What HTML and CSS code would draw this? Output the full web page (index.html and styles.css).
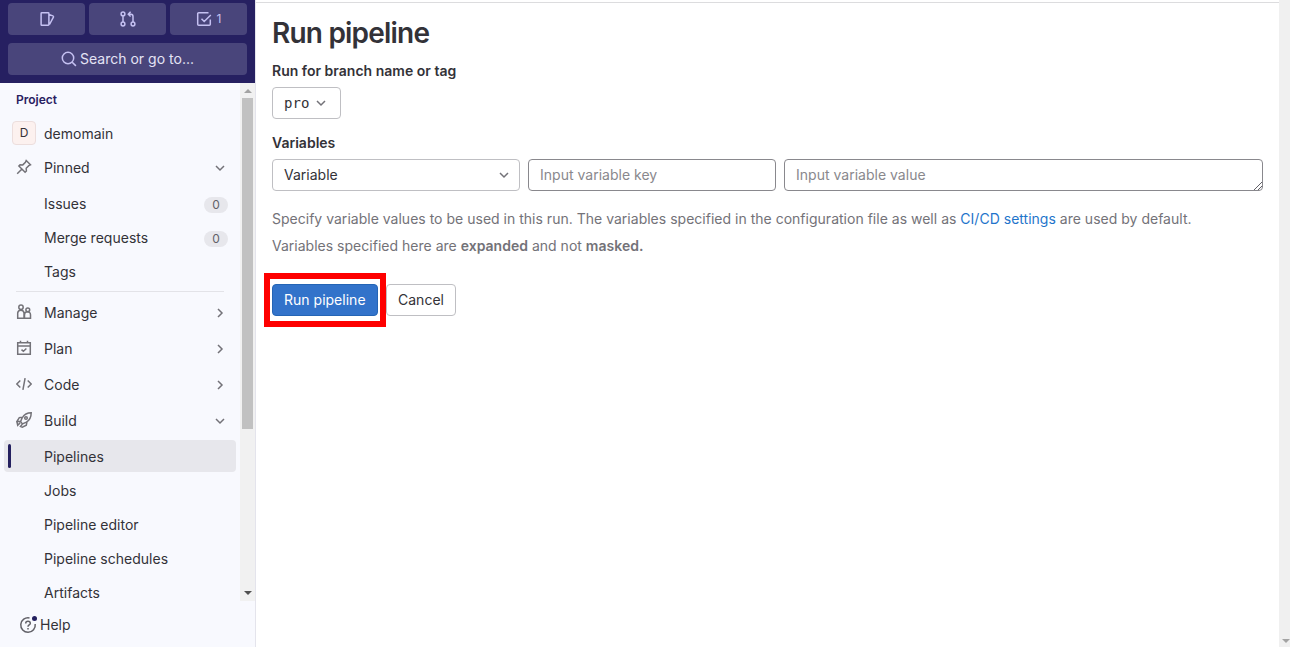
FILE: index.html
```html
<!DOCTYPE html>
<html lang="en">
<head>
<meta charset="utf-8">
<title>Run pipeline</title>
<link rel="stylesheet" href="styles.css">
</head>
<body>
<div class="app">
  <aside class="sidebar">
    <header class="top">
      <div class="counters">
        <button class="tool" aria-label="Issues"><svg class="ico" viewBox="0 0 16 16"><path d="M2.800 1.700h6.400a.7.7 0 0 1 .7.7v11.200a.7.7 0 0 1-.7.7H2.800a.7.7 0 0 1-.7-.7V2.400a.7.7 0 0 1 .7-.7zM10 3.500l3.800 1.400c.6.2.8.7.6 1.200L10.500 13.500"/></svg></button>
        <button class="tool" aria-label="Merge requests"><svg class="ico" viewBox="0 0 16 16"><circle cx="3" cy="2.900" r="1.900"/><circle cx="3" cy="13" r="1.900"/><circle cx="13" cy="13" r="1.900"/><path d="M3 5v6M13 11V5.500c0-1.300-.7-2.300-2-2.300H8.500M10.600.8L8.300 3.200l2.300 2.300"/></svg></button>
        <button class="tool" aria-label="To-do"><svg class="ico" viewBox="0 0 16 16"><path d="M14.300 8.500v4.800a1 1 0 0 1-1 1H2.700a1 1 0 0 1-1-1V2.700a1 1 0 0 1 1-1h9.800M5.500 7.700l2.700 2.800L14.800 4"/></svg><span>1</span></button>
      </div>
      <button class="search"><svg class="ico" viewBox="0 0 16 16"><circle cx="7" cy="7" r="5.700"/><path d="M11.200 11.200l3.700 3.700"/></svg><span>Search or go to...</span></button>
    </header>
    <div class="scroller">
      <nav class="nav">
        <h2 class="context">Project</h2>
        <a class="item project"><span class="avatar">D</span><span class="label">demomain</span></a>
        <a class="item gap-after"><svg class="ico" viewBox="0 0 16 16"><path d="M1.200 14.800L5.700 10.300M10.200 1.500l4.300 4.300-1.700.9-2.600 2.600.2 2.700-1.300 1.200L2.900 7l1.200-1.200 2.700.1 2.600-2.600z"/></svg><span class="label">Pinned</span><svg class="chev" viewBox="0 0 16 16"><path d="M4 6l4 4 4-4"/></svg></a>
        <a class="item sub"><span class="label">Issues</span><span class="badge">0</span></a>
        <a class="item sub"><span class="label">Merge requests</span><span class="badge">0</span></a>
        <a class="item sub"><span class="label">Tags</span></a>
        <hr class="rule">
        <a class="item section"><svg class="ico" viewBox="0 0 16 16"><circle cx="5" cy="3.300" r="2.200"/><circle cx="11.800" cy="5.800" r="1.900"/><path d="M8 14.300H1.700V8.800a3.200 3.200 0 0 1 6.300 0zM8.500 14.300h6v-3.600a2.800 2.800 0 0 0-6 0z"/></svg><span class="label">Manage</span><svg class="chev" viewBox="0 0 16 16"><path d="M6 4l4 4-4 4"/></svg></a>
        <a class="item section"><svg class="ico" viewBox="0 0 16 16"><path d="M1.700 2.700h12.600v11.600H1.700zM1.700 6h12.600M4.500.7v2M11.500.7v2M5.500 9.600l1.900 1.700 3-2.800"/></svg><span class="label">Plan</span><svg class="chev" viewBox="0 0 16 16"><path d="M6 4l4 4-4 4"/></svg></a>
        <a class="item section"><svg class="ico" viewBox="0 0 16 16"><path d="M4.300 4.500L.8 8l3.500 3.500M11.700 4.500L15.200 8l-3.500 3.500M9.100 2.200L6.900 13.800"/></svg><span class="label">Code</span><svg class="chev" viewBox="0 0 16 16"><path d="M6 4l4 4-4 4"/></svg></a>
        <a class="item section"><svg class="ico" viewBox="0 0 16 16"><path d="M15.200.8c-4.400 0-6.800 1.400-9 5L4.500 9.600l2 2.300 3.900-1.700c3.600-2.200 4.800-5 4.800-9.400zM6.500 5.300L3.300 5.600.9 9.500l3.600.1M.9 9.500l.8 3.700 2.400-2.300M6.500 11.900l-2 2.600 1.800.7 4-1.900.7-3.500"/><circle cx="10" cy="6" r="1.300"/></svg><span class="label">Build</span><svg class="chev" viewBox="0 0 16 16"><path d="M4 6l4 4 4-4"/></svg></a>
        <a class="item sub active"><span class="label">Pipelines</span></a>
        <a class="item sub"><span class="label">Jobs</span></a>
        <a class="item sub"><span class="label">Pipeline editor</span></a>
        <a class="item sub"><span class="label">Pipeline schedules</span></a>
        <a class="item sub"><span class="label">Artifacts</span></a>
      </nav>
      <div class="bar"><i class="tri up"></i><i class="thumb"></i><i class="tri down"></i></div>
    </div>
    <footer class="help"><svg class="ico" viewBox="0 0 16 16"><path d="M9.500.9A7.250 7.250 0 1 0 15.200 7M5.700 6.500c0-1.400 1-2.200 2.300-2.200s2.300.8 2.300 2.100C10.300 8 8 7.900 8 9.700M8 11v1.500"/><circle class="dot" cx="14.500" cy="1.500" r="2.500"/></svg><span>Help</span></footer>
  </aside>
  <main class="main">
    <h1 class="title">Run pipeline</h1>
    <div class="field-label">Run for branch name or tag</div>
    <button class="select ref"><span>pro</span><svg class="chev" viewBox="0 0 16 16"><path d="M4 6l4 4 4-4"/></svg></button>
    <div class="field-label vars">Variables</div>
    <div class="row">
      <button class="select type"><span>Variable</span><svg class="chev" viewBox="0 0 16 16"><path d="M4 6l4 4 4-4"/></svg></button>
      <div class="input key">Input variable key</div>
      <div class="input value"><span>Input variable value</span><svg class="grip" viewBox="0 0 9 9"><path d="M1 9l8-8M5 9l4-4"/></svg></div>
    </div>
    <p class="hint">Specify variable values to be used in this run. The variables specified in the configuration file as well as <a>CI/CD settings</a> are used by default.<br>Variables specified here are <b>expanded</b> and not <b>masked.</b></p>
    <div class="actions">
      <div class="mark"><button class="btn primary">Run pipeline</button></div>
      <button class="btn">Cancel</button>
    </div>
  </main>
  <div class="page-bar"><i class="tri down"></i></div>
</div>
</body>
</html>
```
FILE: styles.css
```css
* { box-sizing: border-box; }
body { margin: 0; height: 647px; overflow: hidden; background: #fff; color: #333238; font: 14px/20px Inter, "Liberation Sans", sans-serif; letter-spacing: .012px; }
button { margin: 0; font: inherit; letter-spacing: inherit; color: inherit; white-space: nowrap; }
svg { fill: none; stroke: currentColor; stroke-width: 1.5; flex: none; }
.ico { width: 16px; height: 16px; stroke-width: 1.5; }
.chev { width: 16px; height: 16px; stroke-width: 1.5; color: #737278; }
.app { display: flex; height: 647px; }
.sidebar { width: 256px; display: flex; flex-direction: column; background: #f8f9fe; border-right: 1px solid #e4e4ec; }
.top { height: 83px; padding: 3px 8px 8px; background: #262061; }
.counters { display: flex; gap: 4px; }
.tool, .search { display: flex; align-items: center; justify-content: center; border: 0; border-radius: 4px; height: 32px; background: #49457b; color: #c5c1f2; }
.tool { flex: 1; gap: 5px; font-size: 12px; padding: 0; }
.search { width: 239px; margin-top: 8px; gap: 3px; color: #e4e3f5; }
.search .ico { color: #c5c1f2; }
.scroller { height: 518px; display: flex; }
.nav { width: 240px; padding: 7px 4px 0; }
.context { margin: 0 0 7px 12px; font-size: 12px; line-height: 20px; font-weight: 600; color: #292061; }
.item { display: flex; align-items: center; height: 32px; margin-bottom: 2px; padding: 1px 8px 0 12px; border-radius: 4px; width: 232px; }
.item > .ico { color: #737278; margin: -2px 12px 0 0; }
.item .label { flex: 1; }
.gap-after { margin-bottom: 4px; }
.section { margin-bottom: 4px; }
.project { padding-left: 8px; }
.avatar { width: 24px; height: 24px; margin: -1px 8px 0 0; border: 1px solid #ecdedd; border-radius: 4px; background: #fcf1ef; font-size: 12px; line-height: 22px; text-align: center; }
.sub { padding-left: 40px; }
.badge { width: 24px; height: 16px; border-radius: 8px; background: #e7e7ec; color: #626168; font-size: 12px; line-height: 16px; text-align: center; margin-top: 2px; }
.rule { height: 1px; border: 0; margin: 4px 12px; width: 208px; background: #e3e3e8; }
.active { background: #e7e7ec; padding-left: 4px; }
.active::before { content: ""; width: 3px; height: 24px; margin: -1px 33px 0 0; border-radius: 2px; background: #24205f; }
.bar { width: 15px; height: 518px; background: #f1f1f1; display: flex; flex-direction: column; align-items: center; padding: 6px 0; }
.thumb { width: 11px; height: 331px; margin: 5px 0 auto; background: #c1c1c1; }
.tri { width: 0; height: 0; border: 4px solid transparent; }
.up { border-top: 0; border-bottom-color: #a3a3a3; }
.down { border-bottom: 0; border-top-color: #505050; }
.help { display: flex; align-items: center; height: 46px; padding: 2px 20px 0; gap: 4px; }
.help .ico { overflow: visible; color: #626168; }
.dot { fill: #24205f; stroke: none; }
.main { flex: 1; min-width: 0; padding: 15px 16px 0; border-top: 2px solid #fff; box-shadow: inset 0 1px #dcdcde; display: flex; flex-direction: column; align-items: flex-start; }
.title { margin: 0; font-size: 28px; line-height: 32px; font-weight: 600; letter-spacing: -.8px; }
.field-label { font-weight: 600; margin-top: 12px; }
.select, .input, .btn { height: 32px; border: 1px solid #bfbfc3; border-radius: 4px; background: #fff; padding: 0 11px; display: flex; align-items: center; }
.ref { width: 69px; margin-top: 6px; gap: 4px; font: 14px "DejaVu Sans Mono", monospace; }
.vars { margin-top: 14px; }
.row { display: flex; gap: 8px; margin-top: 6px; align-self: stretch; }
.type { width: 248px; justify-content: space-between; padding-right: 7px; }
.input { border-color: #89888d; color: #89888d; }
.key { width: 248px; }
.value { width: 479px; justify-content: space-between; padding-right: 0; }
.grip { width: 9px; height: 9px; stroke-width: 1; color: #626168; align-self: flex-end; }
.hint { margin: 14px 0 0; line-height: 27px; color: #737278; white-space: nowrap; }
.hint a { color: #1f75cb; }
.hint b { font-weight: 600; }
.actions { display: flex; align-items: center; margin: 14px 0 0 -8px; }
.mark { width: 122px; height: 54px; border: 6px solid #fe0000; padding: 5px 2px; }
.primary { width: 106px; background: #3273ca; border-color: #2465b5; color: #fff; }
.page-bar { width: 11px; background: #f0f0f0; display: flex; align-items: flex-end; padding: 0 0 4px 3px; }
.page-bar .down { border-top-color: #a3a3a3; }
```
